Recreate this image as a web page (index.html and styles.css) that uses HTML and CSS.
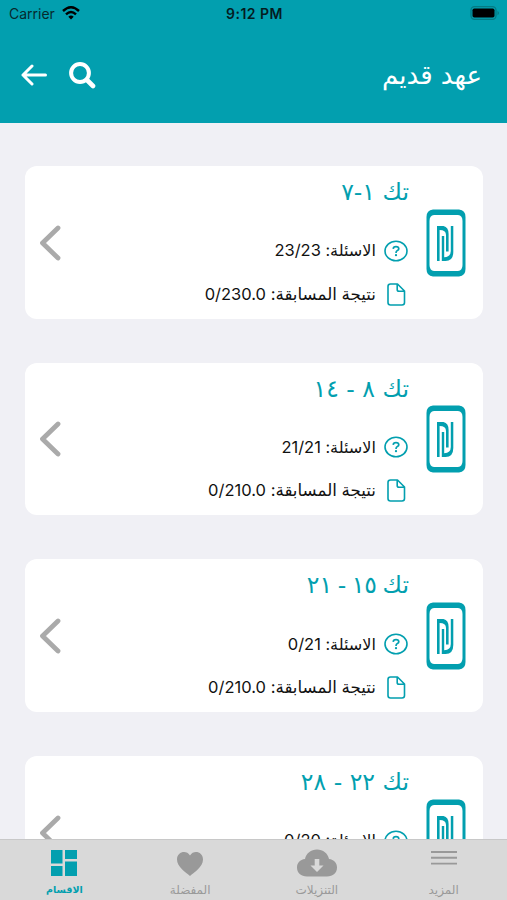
FILE: index.html
```html
<!DOCTYPE html>
<html lang="ar" dir="rtl">
<head>
<meta charset="utf-8">
<title>عهد قديم</title>
<link rel="stylesheet" href="styles.css">
</head>
<body>
<svg class="defs" aria-hidden="true">
  <symbol id="scroll" viewBox="0 0 40 68">
    <path fill="currentColor" fill-rule="evenodd" d="M7 0.5H33Q39.5 1 39.5 8V60Q39.5 67 33 67.5H7Q0.5 67 0.5 60V8Q0.5 1 7 0.5ZM8 6Q3.5 6.5 3.5 12V56Q3.5 61.500 8 62H32Q36.500 61.500 36.500 56V12Q36.500 6.500 32 6Z"/>
    <path fill="currentColor" d="M11 17H17.500Q22.600 18 22.600 25V42.500H20V26Q20 21 13.600 21V52H11ZM15.800 27H18.200V48.300Q24.800 48 24.800 42V17H27.300V43Q27.300 52 19.500 52H15.800Z"/>
  </symbol>
  <symbol id="question" viewBox="0 0 24 22">
    <ellipse cx="12" cy="11" rx="11" ry="9.800" fill="none" stroke="currentColor" stroke-width="1.600"/>
    <path d="M9.200 8.900Q9.300 6.600 12 6.600T14.800 8.700Q14.800 9.900 13.400 10.600T12 12.900" fill="none" stroke="currentColor" stroke-width="1.700"/>
    <circle cx="12" cy="15.200" r="1.150" fill="currentColor"/>
  </symbol>
  <symbol id="page" viewBox="0 0 19 23">
    <path d="M3.500 1H10.500L17.500 8V19.500Q17.500 22 15 22H3.500Q1 22 1 19.500V3.500Q1 1 3.500 1ZM10.200 1V6.500Q10.200 8.300 12 8.300H17.500" fill="none" stroke="currentColor" stroke-width="1.600" stroke-linejoin="round"/>
  </symbol>
  <symbol id="chevron" viewBox="0 0 22 36">
    <path d="M19 3L3.500 18L19 33" fill="none" stroke="currentColor" stroke-width="4.800" stroke-linecap="round" stroke-linejoin="round"/>
  </symbol>
</svg>
<div class="app">
  <header class="top">
    <div class="status" dir="ltr">
      <div class="carrier"><span>Carrier</span>
        <svg class="wifi" viewBox="0 0 18 14"><g fill="none" stroke="currentColor" stroke-width="2.400"><path d="M1 5Q9-2.500 17 5"/><path d="M4 8.300Q9 3.500 14 8.300"/></g><path d="M6.300 10.800Q9 8.400 11.700 10.800L9 13.500Z" fill="currentColor"/></svg>
      </div>
      <div class="clock">9:12 PM</div>
      <svg class="battery" viewBox="0 0 30 14"><rect x="1" y=".7" width="25" height="12.600" rx="3.500" fill="none" stroke="#047b84" stroke-width="1.300"/><rect x="2.500" y="2.500" width="22" height="9" rx="1.800"/><path d="M27.500 4.700Q30.500 7 27.500 9.300Z" fill="#047b84"/></svg>
    </div>
    <div class="bar">
      <h1>عهد قديم</h1>
      <div class="tools" dir="ltr">
        <svg class="back" viewBox="0 0 26 22"><path d="M24.500 11H2M11 2L2 11L11 20" fill="none" stroke="currentColor" stroke-width="3" stroke-linecap="round" stroke-linejoin="round"/></svg>
        <svg class="search" viewBox="0 0 27 27"><circle cx="11" cy="11" r="8.900" fill="none" stroke="currentColor" stroke-width="4"/><path d="M18 18L24 24" stroke="currentColor" stroke-width="4.600" stroke-linecap="round"/></svg>
      </div>
    </div>
  </header>
  <main class="list">
    <article class="card">
      <svg class="scroll"><use href="#scroll"/></svg>
      <div class="info">
        <h2>تك ١-٧</h2>
        <p><svg class="q"><use href="#question"/></svg><span>الاسئلة: <b>23/23</b></span></p>
        <p class="score"><svg class="d"><use href="#page"/></svg><span>نتيجة المسابقة: <b>0/230.0</b></span></p>
      </div>
      <svg class="chevron"><use href="#chevron"/></svg>
    </article>
    <article class="card">
      <svg class="scroll"><use href="#scroll"/></svg>
      <div class="info">
        <h2>تك ٨ - ١٤</h2>
        <p><svg class="q"><use href="#question"/></svg><span>الاسئلة: <b>21/21</b></span></p>
        <p class="score"><svg class="d"><use href="#page"/></svg><span>نتيجة المسابقة: <b>0/210.0</b></span></p>
      </div>
      <svg class="chevron"><use href="#chevron"/></svg>
    </article>
    <article class="card">
      <svg class="scroll"><use href="#scroll"/></svg>
      <div class="info">
        <h2 class="long">تك ١٥ - ٢١</h2>
        <p><svg class="q"><use href="#question"/></svg><span>الاسئلة: <b>0/21</b></span></p>
        <p class="score"><svg class="d"><use href="#page"/></svg><span>نتيجة المسابقة: <b>0/210.0</b></span></p>
      </div>
      <svg class="chevron"><use href="#chevron"/></svg>
    </article>
    <article class="card">
      <svg class="scroll"><use href="#scroll"/></svg>
      <div class="info">
        <h2>تك ٢٢ - ٢٨</h2>
        <p><svg class="q"><use href="#question"/></svg><span>الاسئلة: <b>0/20</b></span></p>
      </div>
      <svg class="chevron"><use href="#chevron"/></svg>
    </article>
  </main>
  <nav class="tabs">
    <a class="tab">
      <svg viewBox="0 0 42 28"><path d="M8 3H34M8 8.800H34M8 14.600H34" stroke="currentColor" stroke-width="1.900"/></svg>
      <span>المزيد</span>
    </a>
    <a class="tab">
      <svg viewBox="0 0 42 28"><path fill="currentColor" fill-rule="evenodd" d="M11 27.500C5 27.500 1 24 1 18.500C1 14 4 10.500 9 10C10 4.500 15 .5 21 .5C27 .5 32 4.500 33 10C38 10.500 41 14 41 18.500C41 24 37 27.500 31 27.500ZM18.700 10V16.500H14.500L21 23L27.500 16.500H23.300V10Z"/></svg>
      <span>التنزيلات</span>
    </a>
    <a class="tab">
      <svg viewBox="0 0 42 28"><path fill="currentColor" d="M21 27C17 23.500 8 18 8 10.500C8 2.500 17.500 .5 21 6.500C24.500 .5 34 2.500 34 10.500C34 18 25 23.500 21 27Z"/></svg>
      <span>المفضلة</span>
    </a>
    <a class="tab active">
      <svg viewBox="0 0 42 28"><path fill="currentColor" d="M8 1H19.500V14.500H8ZM22 1H34V10H22ZM8 17H19.500V27H8ZM22 12.500H34V27H22Z"/></svg>
      <span>الاقسام</span>
    </a>
  </nav>
</div>
</body>
</html>
```
FILE: styles.css
```css
* { box-sizing: border-box; }
body {
  margin: 0;
  background: #f0f0f5;
  font-family: Inter, "DejaVu Sans", sans-serif;
  color: #111;
}
svg { display: block; flex: none; }
.defs { position: absolute; width: 0; height: 0; }
.app { display: flex; flex-direction: column; width: 507px; height: 900px; overflow: hidden; }
.top { flex: none; height: 123px; background: #029faf; color: #fff; }
.status {
  display: grid;
  grid-template-columns: 1fr auto 1fr;
  align-items: center;
  height: 27px;
  padding: 0 7px 0 9px;
  color: #062a2e;
  font-size: 14px;
}
.carrier { display: flex; align-items: center; gap: 7px; }
.wifi { width: 18px; height: 14px; margin-top: -2px; color: #000; }
.clock { color: #041c1f; font-weight: 600; font-size: 14px; letter-spacing: 0.5px; }
.battery { width: 30px; height: 14px; margin-top: -1px; justify-self: end; }
.bar { display: flex; justify-content: space-between; align-items: center; height: 96px; padding: 0 25px 0 21px; }
h1 { margin: 0; font: 400 26px/36px "DejaVu Sans", sans-serif; }
.tools { display: flex; align-items: center; gap: 22px; }
.back { width: 26px; height: 22px; }
.search { width: 27px; height: 27px; }
.list { flex: 1; min-height: 0; overflow: hidden; display: flex; flex-direction: column; gap: 44px; padding: 43px 24px 0 25px; }
.card { flex: none; display: flex; height: 152.7px; padding: 0 17px 0 14px; border-radius: 12px; background: #fff; }
.scroll { width: 40px; height: 68px; margin-top: 42.5px; color: #029faf; }
.info { flex: 1; padding: 9px 17px 0 0; }
h2 { margin: 0 0 20px; font: 400 23.6px/34px "DejaVu Sans", sans-serif; color: #029faf; }
h2.long { word-spacing: -2px; letter-spacing: -0.3px; }
.info p { display: flex; align-items: center; gap: 8px; height: 43.5px; margin: 0; padding-right: 1px; font-size: 16.1px; white-space: nowrap; }
.info .score { font-size: 16.7px; }
.info span { margin-top: -1px; }
.info b { font-weight: 400; font-size: 16.5px; letter-spacing: -0.1px; }
.q { width: 24px; height: 22px; color: #029faf; }
.d { width: 19px; height: 23px; margin: 0 2.5px; color: #029faf; }
.chevron { width: 22px; height: 36px; margin-top: 58.5px; color: #aaa; }
.tabs { flex: none; display: grid; grid-template-columns: repeat(4, 1fr); height: 61px; background: #d9d9d9; border-top: 1px solid #c8c8c8; }
.tab { display: flex; flex-direction: column; align-items: center; padding-top: 9px; color: #999; font: 400 12px/16px "DejaVu Sans", sans-serif; }
.tab svg { width: 42px; height: 28px; margin-bottom: 5px; }
.tab.active { padding-left: 2px; color: #029faf; font-weight: 700; font-size: 9.5px; }
```
